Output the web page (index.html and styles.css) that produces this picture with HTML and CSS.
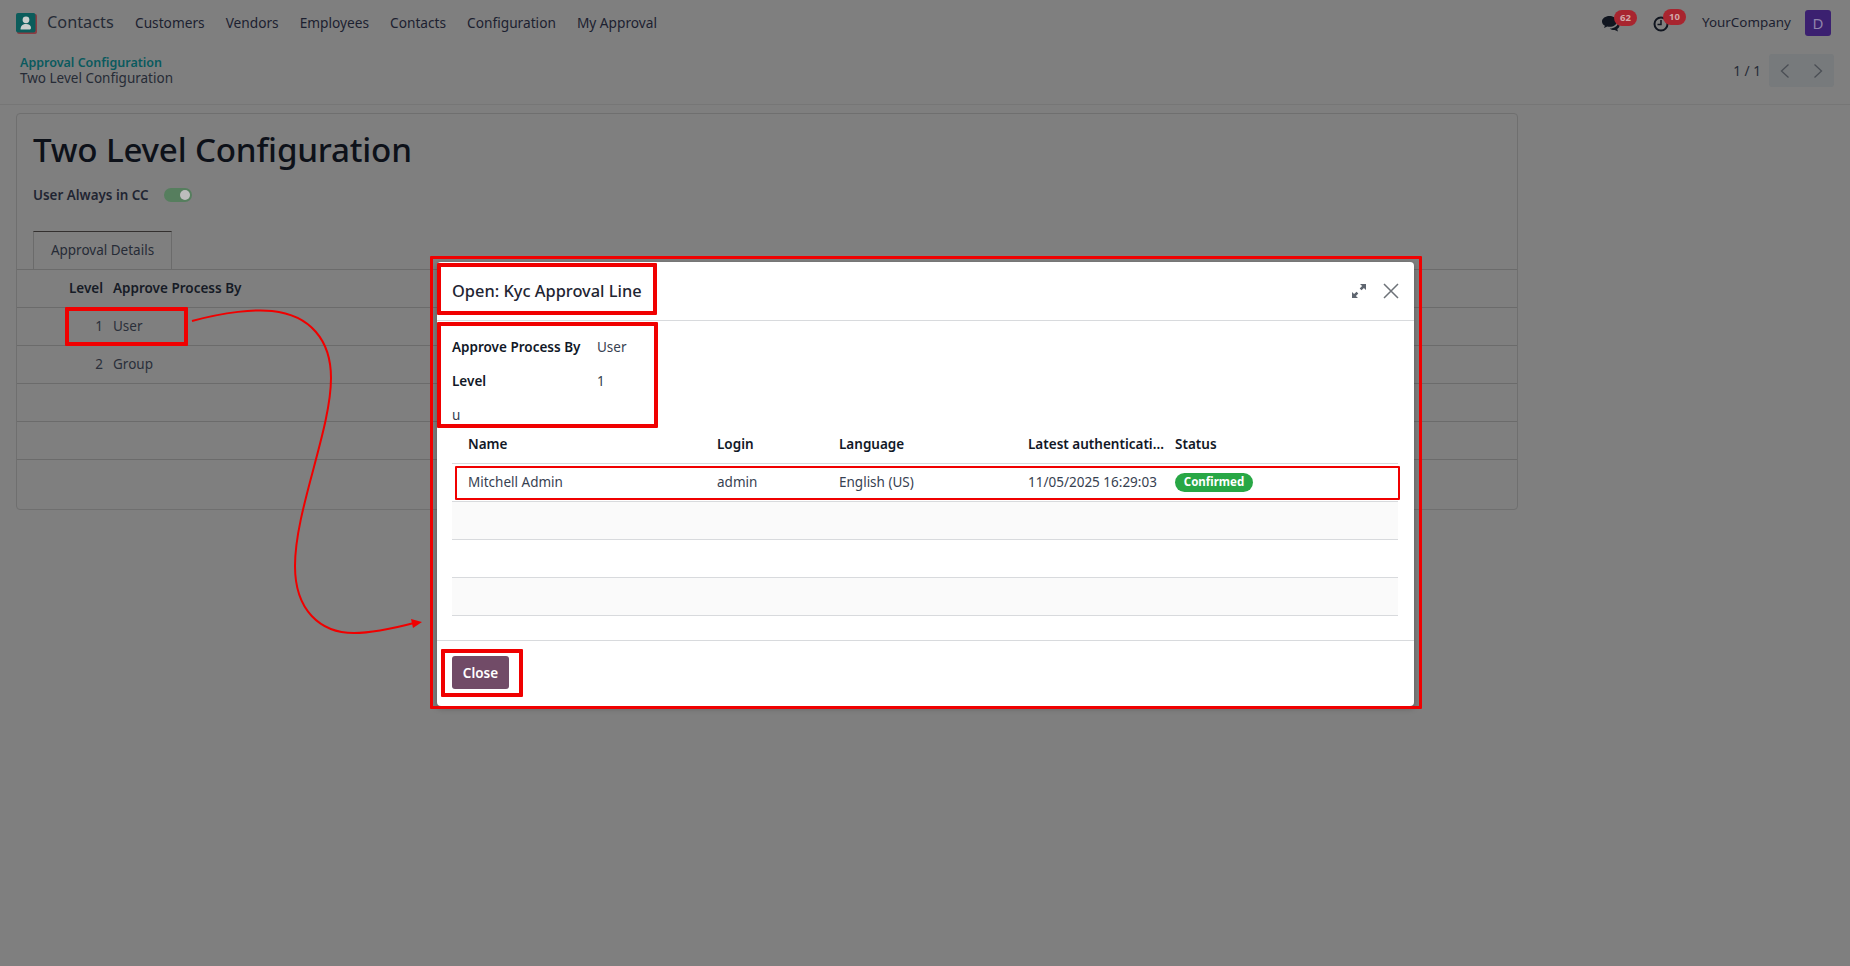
FILE: index.html
```html
<!DOCTYPE html>
<html lang="en">
<head>
<meta charset="utf-8">
<title>Two Level Configuration</title>
<link rel="stylesheet" href="styles.css">
</head>
<body>
<div class="page">
  <header class="nav">
    <div class="nav-left">
      <svg class="logo" width="21" height="21" viewBox="0 0 21 21">
        <rect x="1" y="1" width="20" height="20" rx="2" fill="#8a3c42"/>
        <rect x="0" y="0" width="19.5" height="19.5" rx="2" fill="#0b5c5b"/>
        <circle cx="10" cy="6.8" r="3.4" fill="#c9cdcb"/>
        <path d="M4.5 16.5c0-4 2.5-5.6 5.500-5.600s5 1.600 5 3.800c0 1.200-.6 1.800-1.800 1.800z" fill="#c9cdcb"/>
      </svg>
      <span class="brand">Contacts</span>
      <nav class="menu">
        <span>Customers</span><span>Vendors</span><span>Employees</span><span>Contacts</span><span>Configuration</span><span>My Approval</span>
      </nav>
    </div>
    <div class="nav-right">
      <div class="sys sys-chat">
        <svg width="18" height="16" viewBox="0 0 18 16"><path d="M7.500 0C3.400 0 0 2.400 0 5.500c0 1.800 1.100 3.300 2.900 4.300L2 12l3.300-1.400c.7.100 1.400.2 2.200.2 4.100 0 7.500-2.400 7.500-5.300S11.600 0 7.500 0z" fill="#10151f"/><path d="M16 6.500c.9.900 1.500 2 1.500 3.100 0 1.500-.9 2.700-2.300 3.500l.8 2.400-3.300-1.600c-1.800.1-3.700-.4-4.900-1.500 4 .1 8.200-2.300 8.200-6z" fill="#10151f"/></svg>
        <b class="badge">62</b>
      </div>
      <div class="sys sys-clock">
        <svg width="16" height="16" viewBox="0 0 16 16"><circle cx="8" cy="8" r="6.500" fill="none" stroke="#10151f" stroke-width="2"/><path d="M8 4v4.500H4.500" fill="none" stroke="#10151f" stroke-width="1.500"/></svg>
        <b class="badge">10</b>
      </div>
      <span class="company">YourCompany</span>
      <span class="avatar">D</span>
    </div>
  </header>

  <div class="control">
    <div class="crumbs">
      <a class="crumb-link">Approval Configuration</a>
      <span class="crumb-cur">Two Level Configuration</span>
    </div>
    <div class="pager">
      <span class="pager-val">1 / 1</span>
      <div class="pager-btns">
        <span class="pager-btn"><svg width="12" height="16" viewBox="0 0 12 16"><path d="M9.500 1.500 2.500 8l7 6.500" fill="none" stroke="#4b4f55" stroke-width="1.300"/></svg></span>
        <span class="pager-btn"><svg width="12" height="16" viewBox="0 0 12 16"><path d="M2.500 1.500 9.500 8l-7 6.500" fill="none" stroke="#4b4f55" stroke-width="1.300"/></svg></span>
      </div>
    </div>
  </div>

  <main class="content">
    <section class="card">
      <h1 class="title">Two Level Configuration</h1>
      <div class="field">
        <label>User Always in CC</label>
        <span class="toggle"><i></i></span>
      </div>
      <div class="tabs"><span class="tab">Approval Details</span></div>
      <table class="bg-table">
        <thead><tr><th class="c-level">Level</th><th>Approve Process By</th></tr></thead>
        <tbody>
          <tr><td class="c-level">1</td><td>User</td></tr>
          <tr><td class="c-level">2</td><td>Group</td></tr>
          <tr><td></td><td></td></tr>
          <tr><td></td><td></td></tr>
        </tbody>
      </table>
    </section>
  </main>

  <div class="modal">
    <div class="m-head">
      <h4>Open: Kyc Approval Line</h4>
      <div class="m-tools">
        <svg width="14" height="14" viewBox="0 0 14 14"><path d="M8 0h6v6l-2.100-2.100-2.400 2.400-1.800-1.800 2.400-2.400zM6 14H0V8l2.100 2.100 2.400-2.400 1.800 1.800-2.400 2.400z" fill="#5f6670"/></svg>
        <svg width="16" height="16" viewBox="0 0 16 16"><path d="M1 1l14 14M15 1 1 15" stroke="#6d7278" stroke-width="1.500" fill="none"/></svg>
      </div>
    </div>
    <div class="m-body">
      <div class="m-row"><strong>Approve Process By</strong><span>User</span></div>
      <div class="m-row"><strong>Level</strong><span>1</span></div>
      <div class="m-u">u</div>
      <table class="m-table">
        <colgroup><col class="w1"><col class="w2"><col class="w3"><col class="w4"><col class="w5"></colgroup>
        <thead><tr><th>Name</th><th>Login</th><th>Language</th><th>Latest authenticati...</th><th>Status</th></tr></thead>
        <tbody>
          <tr><td>Mitchell Admin</td><td>admin</td><td>English (US)</td><td>11/05/2025 16:29:03</td><td><span class="pill">Confirmed</span></td></tr>
          <tr class="stripe"><td></td><td></td><td></td><td></td><td></td></tr>
          <tr><td></td><td></td><td></td><td></td><td></td></tr>
          <tr class="stripe"><td></td><td></td><td></td><td></td><td></td></tr>
        </tbody>
      </table>
    </div>
    <div class="m-foot"><button class="btn">Close</button></div>
  </div>

  <span class="mark mark-outer"></span>
  <span class="mark mark-title"></span>
  <span class="mark mark-form"></span>
  <span class="mark mark-row"></span>
  <span class="mark mark-close"></span>
  <span class="mark mark-user"></span>
  <svg class="arrow" width="240" height="340" viewBox="185 300 240 340">
    <path d="M192 321C225 312 255 309 272 311C310 315 331 340 331 378C331 430 295 510 295 566C295 610 320 633 354 633C375 633 395 628 414 623" fill="none" stroke="#f00000" stroke-width="2"/>
    <path d="M422 622 411 619 413 628z" fill="#f00000"/>
  </svg>
</div>
</body>
</html>
```
FILE: styles.css
```css
* { box-sizing: border-box; }
html, body { margin: 0; padding: 0; height: 100%; }
body {
  background: #7f7f7f;
  color: #1f2532;
  font-family: "Noto Sans", "Open Sans", sans-serif;
  font-size: 14px;
  overflow: hidden;
}
.page { position: relative; width: 1850px; height: 966px; overflow: hidden; }

/* top bar */
.nav { height: 46px; display: flex; align-items: center; justify-content: space-between; padding: 0 19px 0 16px; }
.nav-left { display: flex; align-items: center; }
.logo { display: block; }
.brand { margin: -2px 0 0 10px; font-size: 16.300px; color: #262b36; width: 88px; }
.menu { display: flex; gap: 21px; margin-top: -2px; font-size: 13.700px; color: #1c2130; }
.nav-right { display: flex; align-items: center; }
.sys { position: relative; display: flex; }
.sys-chat { width: 51px; margin-top: 1px; }
.sys-clock { width: 49px; margin-top: 2px; }
.badge {
  position: absolute; top: -6px; left: 12px;
  width: 23px; height: 16px; border-radius: 8px;
  background: #a8252f; color: #d3a9a9;
  font-size: 9.500px; line-height: 16px; font-weight: 700; text-align: center;
}
.sys-clock .badge { left: 10px; top: -7px; }
.company { margin-top: -2px; font-size: 13.400px; color: #1c2130; width: 103px; }
.avatar { width: 26px; height: 26px; border-radius: 3px; background: #3b2070; color: #8f84aa; font-size: 15px; line-height: 26px; text-align: center; }

/* control panel */
.control { height: 59px; border-bottom: 1px solid #767676; display: flex; justify-content: space-between; padding: 9px 16px 0 20px; }
.crumbs { display: flex; flex-direction: column; line-height: 15px; }
.crumb-link { font-size: 12.500px; font-weight: 600; color: #0a5a5e; }
.crumb-cur { margin-top: 1px; font-size: 13.500px; color: #262b36; }
.pager { display: flex; align-items: flex-start; gap: 8px; margin-top: -1px; }
.pager-val { font-size: 13.600px; color: #262b36; line-height: 33px; }
.pager-btns { display: flex; width: 65px; height: 33px; border-radius: 3px; background: #777a7c; gap: 1px; }
.pager-btn { flex: 1; display: flex; align-items: center; justify-content: center; }

/* form card */
.content { padding: 8px 0 0 16px; }
.card { width: 1502px; height: 397px; border: 1px solid #6f6f6f; border-radius: 4px; padding-top: 15px; }
.title { margin: 0 0 0 16px; font-size: 33.200px; line-height: 42px; font-weight: 500; color: #0d1119; letter-spacing: -.2px; }
.field { margin: 13px 0 0 16px; height: 22px; display: flex; align-items: center; gap: 16px; }
.field label { font-weight: 600; font-size: 13.400px; width: 115px; white-space: nowrap; }
.toggle { width: 28px; height: 14px; border-radius: 7px; background: #567e5e; position: relative; }
.toggle i { position: absolute; right: 2px; top: 2px; width: 10px; height: 10px; border-radius: 50%; background: #bdbdbd; }
.tabs { margin-top: 25px; height: 39px; border-bottom: 1px solid #6b6b6b; padding-left: 16px; }
.tab { display: block; height: 38px; width: 139px; border: 1px solid #6b6b6b; border-top-color: #33302f; border-bottom: 0; text-align: center; line-height: 37px; font-size: 13.500px; color: #262b36; }
.bg-table { width: 100%; border-collapse: collapse; }
.bg-table th, .bg-table td { height: 38px; padding: 0 0 0 9px; border-bottom: 1px solid #6b6b6b; text-align: left; font-size: 13.500px; }
.bg-table th { height: 37px; font-weight: 600; color: #161b26; }
.bg-table td { color: #2a2f3a; }
.bg-table .c-level { width: 87px; padding: 0 1px 0 0; text-align: right; }

/* dialog */
.modal {
  position: absolute; left: 437px; top: 262px; width: 977px; height: 444px;
  background: #fff; border-radius: 4px; display: flex; flex-direction: column;
  box-shadow: 0 2px 6px rgba(0,0,0,.3);
}
.m-head { height: 59px; border-bottom: 1px solid #d8dadd; display: flex; align-items: center; justify-content: space-between; padding: 0 15px 0 15px; }
.m-head h4 { margin: -1px 0 0; font-size: 16.400px; font-weight: 500; color: #1f2532; }
.m-tools { display: flex; align-items: center; gap: 17px; }
.m-body { flex: 1; padding: 9px 16px 0 15px; color: #374151; font-size: 13.500px; }
.m-row { height: 34px; display: flex; align-items: center; }
.m-row strong { width: 145px; font-weight: 600; color: #111827; white-space: nowrap; }
.m-u { height: 19px; margin-top: 8px; line-height: 19px; }
.m-table { width: 946px; border-collapse: collapse; table-layout: fixed; }
.m-table th, .m-table td { height: 38px; padding: 0 8px 0 0; border-bottom: 1px solid #d8dadd; text-align: left; white-space: nowrap; overflow: hidden; }
.m-table th { font-weight: 600; color: #111827; }
.m-table tr > :first-child { padding-left: 16px; }
.stripe td { background: #fafafa; }
.w1 { width: 265px; } .w2 { width: 122px; } .w3 { width: 189px; } .w4 { width: 147px; }
.pill { display: inline-block; width: 78px; height: 19px; border-radius: 10px; background: #28a745; color: #fff; font-size: 11.500px; font-weight: 700; line-height: 18px; text-align: center; vertical-align: 2px; }
.m-foot { height: 66px; border-top: 1px solid #d8dadd; padding: 15px 0 0 15px; }
.btn { width: 57px; height: 33px; border: 0; border-radius: 3px; background: #714b67; color: #fff; font: 600 13.500px "Noto Sans", sans-serif; padding: 0; }

/* annotations drawn over the screenshot */
.mark { position: absolute; border: 4px solid #f00000; border-radius: 1px; }
.mark-outer { left: 430px; top: 256px; width: 992px; height: 453px; border-width: 3px; }
.mark-title { left: 437px; top: 263px; width: 220px; height: 52px; }
.mark-form { left: 437px; top: 322px; width: 221px; height: 106px; }
.mark-row { left: 455px; top: 466px; width: 945px; height: 34px; border-width: 2px; }
.mark-close { left: 441px; top: 649px; width: 82px; height: 48px; }
.mark-user { left: 65px; top: 307px; width: 123px; height: 39px; }
.arrow { position: absolute; left: 185px; top: 300px; }
```
